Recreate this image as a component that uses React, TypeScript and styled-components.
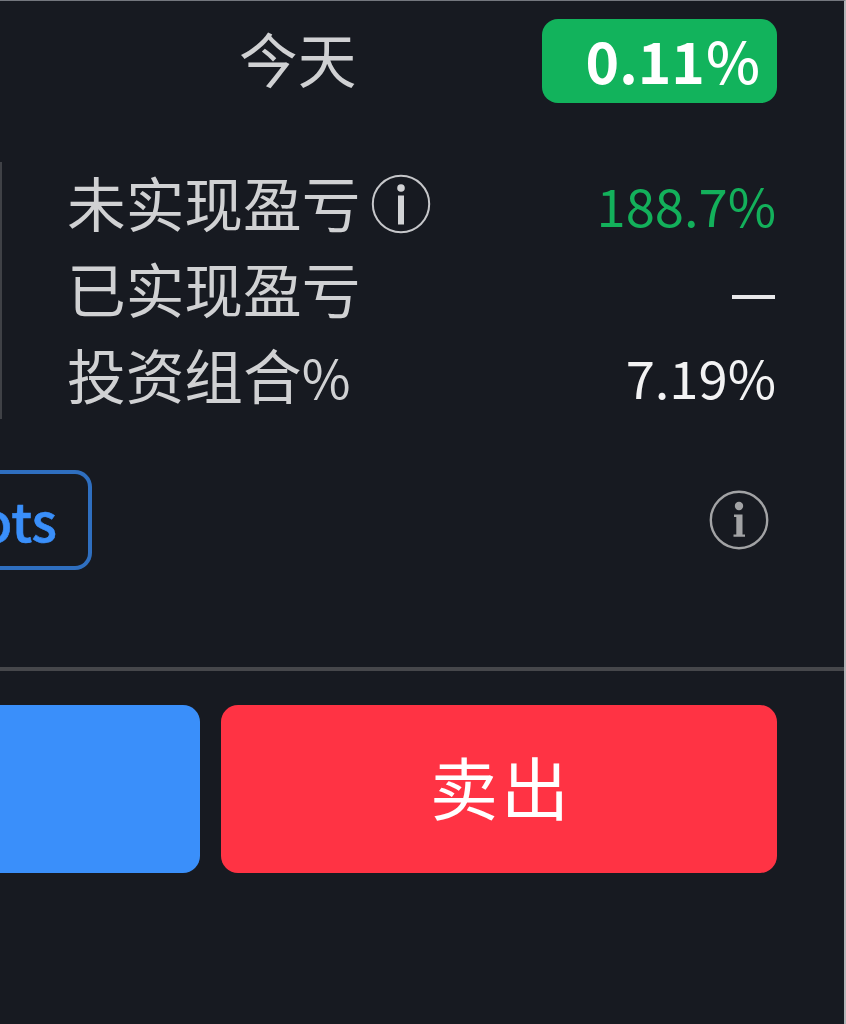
import React from "react";
import styled, { createGlobalStyle } from "styled-components";

const GlobalStyle = createGlobalStyle`
  * { box-sizing: border-box; }
  body { margin: 0; background: #171a21; }
`;

const Screen = styled.main`
  width: 846px;
  height: 1024px;
  overflow: hidden;
  display: flex;
  flex-direction: column;
  background: #171a21;
  border-top: 1px solid #74777e;
  border-right: 2px solid #b4b5b8;
  color: #d0d1d3;
  font-family: "Noto Sans CJK SC", sans-serif;
  font-size: 58.7px;
  white-space: nowrap;
`;

const TodayRow = styled.header`
  display: flex;
  justify-content: space-between;
  height: 161px;
  padding: 18px 67px 0 239px;
`;

const TodayLabel = styled.span`
  line-height: 78px;
`;

const ChangeBadge = styled.span`
  width: 235px;
  height: 84px;
  padding-right: 17px;
  border-radius: 16px;
  background: #12b35c;
  color: #fff;
  font-size: 57px;
  font-weight: 700;
  line-height: 80px;
  text-align: right;
`;

const Percent = styled.span<{ $size: number; $weight?: number }>`
  margin-left: ${(p) => (p.$weight ? 1 : 0)}px;
  font-size: ${(p) => p.$size}px;
  font-weight: ${(p) => p.$weight ?? 400};
`;

const Stats = styled.section`
  height: 257px;
  padding: 0 68px 0 65px;
  border-left: 2px solid #3f4146;
`;

const StatRow = styled.div`
  display: flex;
  align-items: baseline;
  justify-content: space-between;
  height: 86px;
  line-height: 79px;
`;

const StatLabel = styled.span`
  display: flex;
  align-items: baseline;
`;

const StatValue = styled.span<{ $color?: string }>`
  font-size: 52.5px;
  color: ${(p) => p.$color ?? "#f2f2f3"};
`;

const EmptyValue = styled.span`
  width: 43px;
  height: 4px;
  margin: 47px 1px 0 0;
  align-self: flex-start;
  background: #e8e8ea;
`;

const InfoIcon = styled.svg`
  width: 60px;
  height: 60px;
  flex: none;
`;

const LabelInfo = styled(InfoIcon)`
  align-self: flex-start;
  margin: 12px 0 0 11px;
`;

const LotsRow = styled.section`
  display: flex;
  justify-content: space-between;
  height: 248px;
  padding: 51px 75px 0 0;
`;

const LotsButton = styled.button`
  display: flex;
  justify-content: flex-end;
  width: 92px;
  height: 100px;
  padding: 0 31px 0 0;
  overflow: hidden;
  border: 4px solid #2f6fc0;
  border-left: 0;
  border-radius: 0 17px 17px 0;
  background: none;
  color: #3a8ffa;
  font: 500 53px/90px "Noto Sans CJK SC", sans-serif;
  -webkit-text-stroke: 0.6px #3a8ffa;
`;

const LotsInfo = styled(InfoIcon)`
  margin-top: 20px;
`;

const Actions = styled.footer`
  display: flex;
  gap: 21px;
  height: 357px;
  padding: 34px 67px 0 0;
  border-top: 4px solid #46474b;
`;

const ActionButton = styled.button<{ $width: number; $color: string; $flush?: boolean }>`
  width: ${(p) => p.$width}px;
  height: 168px;
  padding: 0 0 6px 4px;
  border: 0;
  border-radius: ${(p) => (p.$flush ? "0 17px 17px 0" : "17px")};
  background: ${(p) => p.$color};
  color: #fff;
  font: 400 68px/162px "Noto Sans CJK SC", sans-serif;
  letter-spacing: 3px;
`;

export default function App() {
  return (
    <>
      <GlobalStyle />
      <Screen>
        <TodayRow>
          <TodayLabel>今天</TodayLabel>
          <ChangeBadge>
            0.11<Percent $size={57.5} $weight={500}>%</Percent>
          </ChangeBadge>
        </TodayRow>
        <Stats>
          <StatRow>
            <StatLabel>
              未实现盈亏
              <LabelInfo viewBox="0 0 60 60">
                <circle cx="30" cy="30" r="28.2" fill="none" stroke="#c6c7ca" strokeWidth="2" />
                <circle cx="30" cy="14" r="3.8" fill="#d2d3d5" />
                <rect x="27" y="21.5" width="6" height="29" fill="#d2d3d5" />
              </LabelInfo>
            </StatLabel>
            <StatValue $color="#13b05b">188.7%</StatValue>
          </StatRow>
          <StatRow>
            <StatLabel>已实现盈亏</StatLabel>
            <EmptyValue />
          </StatRow>
          <StatRow>
            <StatLabel>
              投资组合<Percent $size={53}>%</Percent>
            </StatLabel>
            <StatValue>7.19%</StatValue>
          </StatRow>
        </Stats>
        <LotsRow>
          <LotsButton>ots</LotsButton>
          <LotsInfo viewBox="0 0 60 60">
            <circle cx="30" cy="30" r="28.2" fill="none" stroke="#a2a3a5" strokeWidth="2.4" />
            <circle cx="30" cy="16" r="4.2" fill="#a2a3a5" />
            <path d="M25 24.5h8.5v20h2.5v2.3H24.5V44.5h2.8V27H25z" fill="#a2a3a5" />
          </LotsInfo>
        </LotsRow>
        <Actions>
          <ActionButton $width={200} $color="#3a8ffa" $flush />
          <ActionButton $width={556} $color="#ff3344">卖出</ActionButton>
        </Actions>
      </Screen>
    </>
  );
}
